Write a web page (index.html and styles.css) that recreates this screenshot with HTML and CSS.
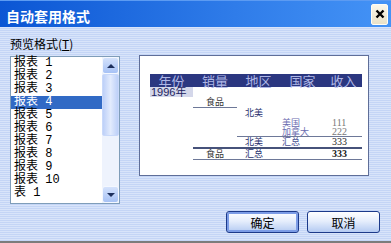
FILE: index.html
```html
<!DOCTYPE html>
<html lang="zh-CN">
  <head>
    <meta charset="UTF-8" />
    <meta name="viewport" content="width=device-width, initial-scale=1.0" />
    <title>自动套用格式</title>
    <link rel="stylesheet" href="styles.css">
  </head>
  <body>
    <div class="window">
      <div class="titlebar">
        <span class="title">自动套用格式</span>
        <span class="close">
          <svg width="10" height="10" viewBox="0 0 10 10">
            <path d="M1.5 1.5 L8.5 8.5 M8.5 1.5 L1.5 8.5" stroke="#000" stroke-width="2.4" />
          </svg>
        </span>
      </div>

      <div class="content">
        <div class="top">
          <div class="left">
            <div class="label">预览格式(<u>T</u>)</div>
            <div class="listbox">
              <ul class="items">
                <li>报表 1</li>
                <li>报表 2</li>
                <li>报表 3</li>
                <li class="selected">报表 4</li>
                <li>报表 5</li>
                <li>报表 6</li>
                <li>报表 7</li>
                <li>报表 8</li>
                <li>报表 9</li>
                <li>报表 10</li>
                <li>表 1</li>
              </ul>
              <div class="scrollbar">
                <div class="arrow up"><span></span></div>
                <div class="track"><div class="thumb"></div></div>
                <div class="arrow down"><span></span></div>
              </div>
            </div>
          </div>

          <div class="preview">
            <div class="sheet">
              <div class="row head">
                <div>年份</div><div>销量</div><div>地区</div><div>国家</div><div>收入</div>
              </div>
              <div class="row r-year">
                <div class="year">1996年</div>
              </div>
              <div class="row r-food">
                <div></div><div class="food rule">食品</div>
              </div>
              <div class="row r-area">
                <div></div><div></div><div class="area">北美</div>
              </div>
              <div class="row r-nation">
                <div></div><div></div><div></div><div class="nation">美国</div><div class="num">111</div>
              </div>
              <div class="row r-nation2">
                <div></div><div></div><div class="rule"></div><div class="nation rule">加拿大</div><div class="num rule">222</div>
              </div>
              <div class="row r-sub">
                <div></div><div class="thick"></div><div class="area thick">北美</div><div class="sum thick">汇总</div><div class="num total thick">333</div>
              </div>
              <div class="row r-total">
                <div></div><div class="food rule">食品</div><div class="sum2 rule">汇总</div><div class="rule"></div><div class="num total bold rule">333</div>
              </div>
            </div>
          </div>
        </div>

        <div class="buttons">
          <button class="btn default">确定</button>
          <button class="btn">取消</button>
        </div>
      </div>
    </div>
  </body>
</html>
```

FILE: styles.css
```css
* {
  box-sizing: border-box;
}
body {
  margin: 0;
  font-family: "Noto Sans CJK SC", "Liberation Sans", sans-serif;
  font-size: 12px;
}
.window {
  width: 391px;
  height: 243px;
  display: flex;
  flex-direction: column;
  background: repeating-linear-gradient(to bottom, #c4d5f6 0 1px, #d8e4fa 1px 2px);
  border-bottom: 2px solid #7c7c7c;
  overflow: hidden;
}
.titlebar {
  height: 27px;
  flex: none;
  display: flex;
  align-items: center;
  justify-content: space-between;
  padding: 0 3px 0 6px;
  background: linear-gradient(to right, #0b56d4, #2f7ce9 60%, #4493f6);
  border-top: 1px solid #5c9bf2;
}
.title {
  color: white;
  font-weight: bold;
  font-size: 14px;
  line-height: 16px;
  margin-top: 3px;
}
.close {
  width: 17px;
  height: 21px;
  display: flex;
  align-items: center;
  justify-content: center;
  background: linear-gradient(to bottom, #fbf7ea, #e9e1c8);
  border: 1px solid #fffdf4;
  border-radius: 2px;
}

.content {
  flex: 1;
  padding: 10px 11px 0 10px;
}
.top {
  display: flex;
}
.left {
  width: 110px;
}
.label {
  height: 19px;
  line-height: 14px;
  color: #000;
}
.listbox {
  height: 148px;
  display: flex;
  background: white;
  border: 1px solid #7f9db9;
}
.items {
  flex: 1;
  list-style: none;
  margin: 0;
  padding: 0;
  font-family: "Liberation Mono", "Noto Sans CJK SC", monospace;
  font-size: 12px;
}
.items li {
  height: 13px;
  line-height: 13px;
  padding-left: 3px;
  white-space: pre;
}
.items .selected {
  background: #316ac5;
  color: white;
}
.scrollbar {
  width: 17px;
  display: flex;
  flex-direction: column;
  background: #eef3fd;
}
.arrow {
  height: 17px;
  display: flex;
  align-items: center;
  justify-content: center;
  background: linear-gradient(to bottom, #d4e2fc, #a7c2f5);
  border: 1px solid #f4f8ff;
  border-radius: 3px;
}
.arrow span {
  width: 0;
  height: 0;
  border-left: 4px solid transparent;
  border-right: 4px solid transparent;
}
.up span {
  border-bottom: 4px solid #1c2f5c;
}
.down span {
  border-top: 4px solid #1c2f5c;
}
.track {
  flex: 1;
}
.thumb {
  height: 62px;
  background: linear-gradient(to right, #bdd0f8, #e2ebfd 50%, #bdd0f8);
  border: 1px solid #c9d9fa;
  border-radius: 2px;
}

.preview {
  margin: 18px 0 0 19px;
  width: 230px;
  height: 121px;
  background: white;
  border: 1px solid #5f6e98;
  padding: 18px 0 0 10px;
}
.sheet {
  width: 212px;
}
.row {
  display: grid;
  grid-template-columns: 43px 44px 43px 45px 37px;
  font-size: 9px;
}
.head {
  height: 13px;
  line-height: 13px;
  background: #2b3780;
  color: #aeb6e6;
  font-size: 13px;
  text-align: center;
}
.r-year {
  height: 10px;
  line-height: 10px;
}
.year {
  background: #d4d7ea;
  color: #1d2360;
  font-family: "Liberation Sans", "Noto Sans CJK SC", sans-serif;
  font-size: 11px;
  padding-left: 1px;
}
.r-food {
  height: 11px;
  line-height: 10px;
}
.r-area {
  height: 10px;
  line-height: 10px;
}
.r-nation {
  height: 9px;
  line-height: 9px;
}
.r-nation2 {
  height: 10px;
  line-height: 9px;
}
.r-sub {
  height: 12px;
  line-height: 10px;
}
.r-total {
  height: 11px;
  line-height: 10px;
}
.rule {
  border-bottom: 1px solid #6d7898;
}
.thick {
  border-bottom: 2px solid #46527a;
}
.food {
  color: #333;
  text-align: center;
}
.area {
  color: #28306e;
  padding-left: 8px;
}
.nation {
  color: #6c6cb0;
  padding-left: 2px;
}
.sum {
  color: #4a4f94;
  padding-left: 2px;
}
.sum2 {
  color: #28306e;
  padding-left: 8px;
}
.num {
  font-family: "Liberation Serif", serif;
  font-size: 10px;
  color: #777;
  padding-left: 7px;
}
.total {
  color: #222;
}
.bold {
  font-weight: bold;
}

.buttons {
  display: flex;
  justify-content: flex-end;
  gap: 8px;
  margin-top: 7px;
}
.btn {
  width: 73px;
  height: 22px;
  font-family: "Noto Sans CJK SC", sans-serif;
  font-size: 12px;
  color: #000;
  background: linear-gradient(to bottom, #ffffff, #e6eefc 45%, #b4caf2);
  border: 1px solid #1c3a8a;
  border-radius: 3px;
  padding: 0;
}
.btn.default {
  box-shadow: inset 0 0 0 2px #7c9ce6;
}
```
